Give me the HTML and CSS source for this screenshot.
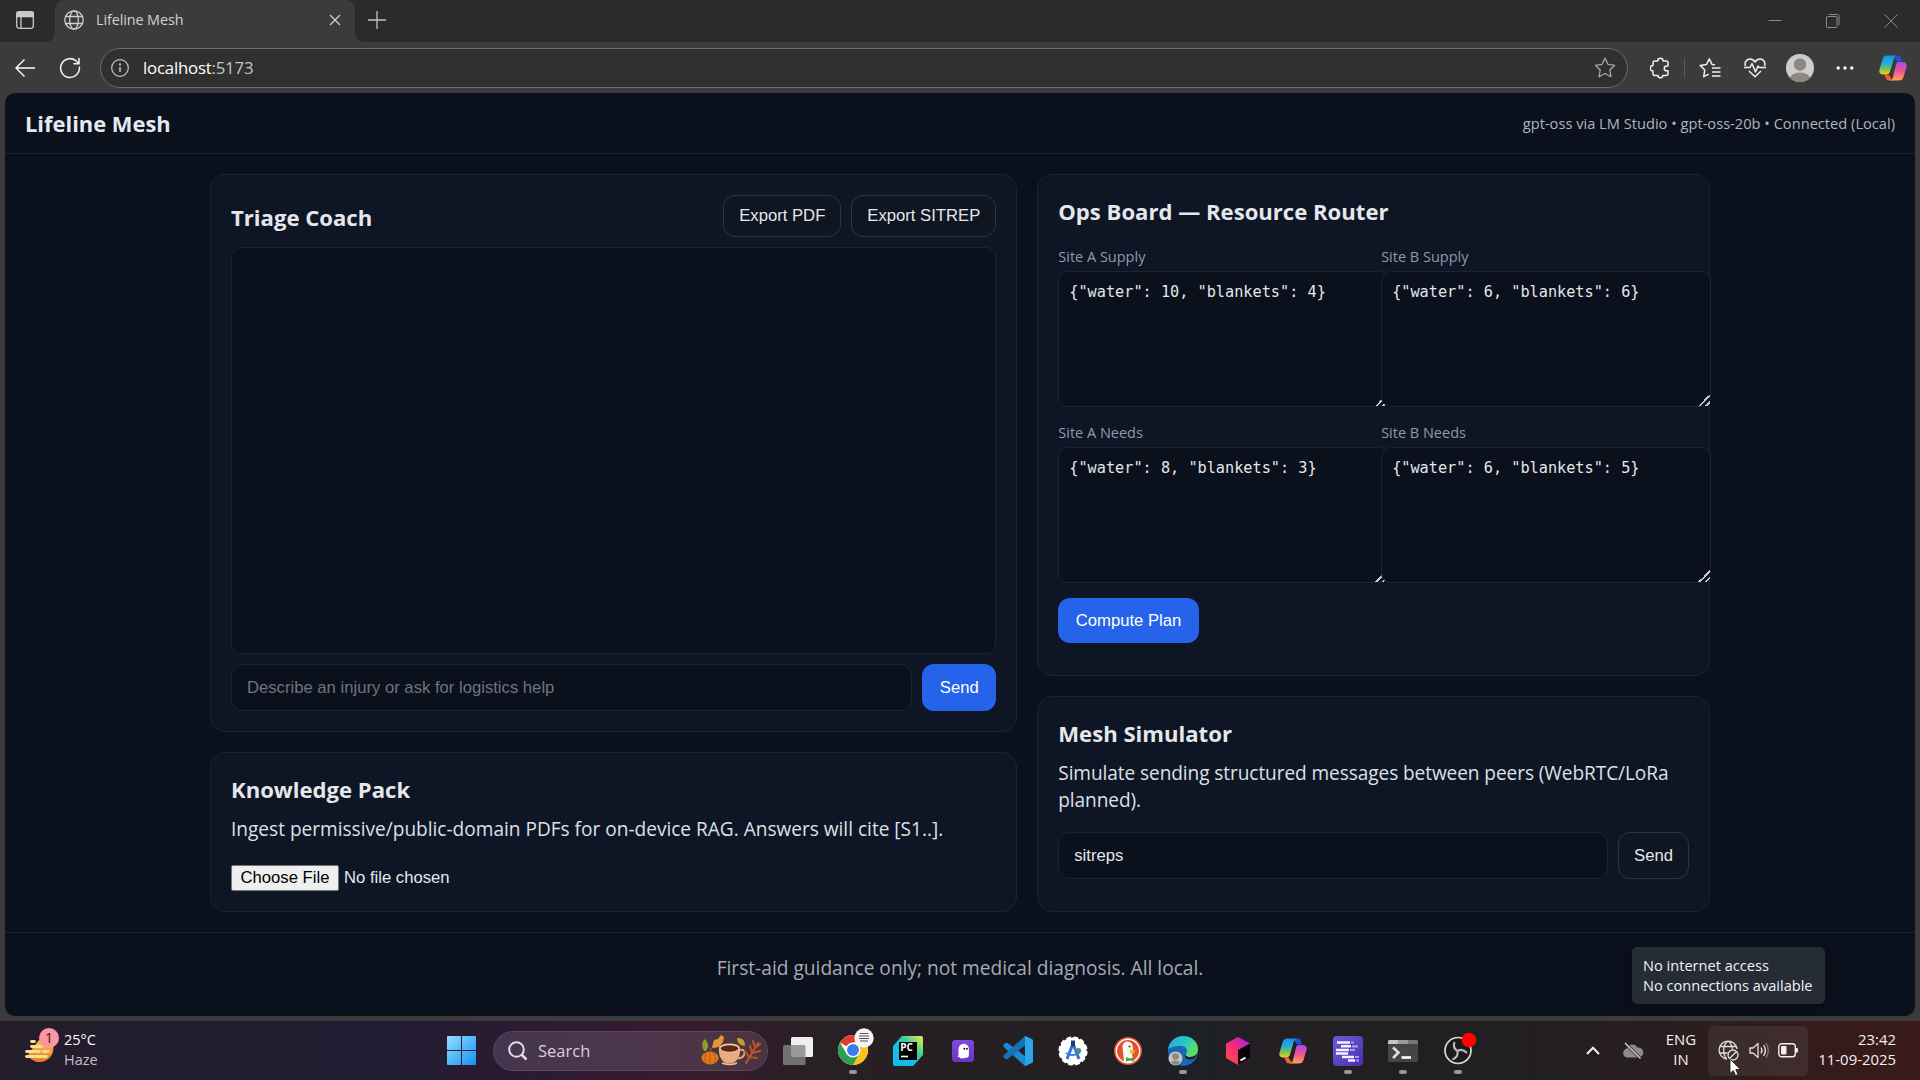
FILE: index.html
```html
<!DOCTYPE html>
<html lang="en">
<head>
<meta charset="utf-8">
<title>Lifeline Mesh</title>
<link rel="stylesheet" href="styles.css">
</head>
<body>
<svg class="defs" width="0" height="0" aria-hidden="true">
  <defs>
    <linearGradient id="cpA" x1="0" y1="0" x2="0" y2="1"><stop offset="0" stop-color="#1d8df0"/><stop offset=".45" stop-color="#27b0d0"/><stop offset=".75" stop-color="#8bc43f"/><stop offset="1" stop-color="#f5d13a"/></linearGradient>
    <linearGradient id="cpB" x1="0" y1="0" x2="0" y2="1"><stop offset="0" stop-color="#a54be8"/><stop offset=".5" stop-color="#f0548c"/><stop offset="1" stop-color="#ffa455"/></linearGradient>
    <linearGradient id="win" x1="0" y1="0" x2="1" y2="1"><stop offset="0" stop-color="#8fe0ff"/><stop offset="1" stop-color="#1490f5"/></linearGradient>
    <linearGradient id="pc" x1="0" y1="1" x2="1" y2="0"><stop offset="0" stop-color="#10b8f0"/><stop offset=".4" stop-color="#16bfe0"/><stop offset=".65" stop-color="#3cd09a"/><stop offset="1" stop-color="#f4f03c"/></linearGradient>
    <linearGradient id="sun" x1="0" y1="0" x2="0" y2="1"><stop offset="0" stop-color="#f7c548"/><stop offset="1" stop-color="#e57b26"/></linearGradient>
    <linearGradient id="edgeA" x1="0" y1="0" x2="1" y2=".5"><stop offset="0" stop-color="#23a5e0"/><stop offset=".6" stop-color="#2cc8c0"/><stop offset="1" stop-color="#63de5e"/></linearGradient>
    <linearGradient id="jb" x1="0" y1="1" x2="1" y2="0"><stop offset="0" stop-color="#ff5a3c"/><stop offset=".5" stop-color="#f52a78"/><stop offset="1" stop-color="#a020f0"/></linearGradient>
    <linearGradient id="lst" x1="0" y1="0" x2="1" y2="1"><stop offset="0" stop-color="#6a5ed8"/><stop offset="1" stop-color="#4a2cae"/></linearGradient>
    <linearGradient id="gh" x1="0" y1="0" x2="0" y2="1"><stop offset="0" stop-color="#8247de"/><stop offset="1" stop-color="#6a35c2"/></linearGradient>
    <symbol id="copilot" viewBox="0 0 28 28">
      <path d="M14 1.500h5c2 0 2.600 1 3.200 3l.8 3h-5z" fill="#1a55c8"/>
      <path d="M8.500 1.500h9.500c-2 0-2.800 1.600-3.300 3.500l-3.500 12c-.6 2-1.700 3.500-4 3.500H4.300C1 20.500-.3 18.500.5 15.500l3-10C4.300 3 5.700 1.500 8.500 1.500z" fill="url(#cpA)"/>
      <path d="M5 20.500h4.500l4 6H10c-2 0-2.700-1-3.300-3z" fill="#f0642c"/>
      <path d="M19.500 8h4.200c3.300 0 4.600 2 3.800 5l-3 10c-.8 2.500-2.200 3.500-5 3.500H10.500c2 0 2.800-1 3.300-3l3-12c.5-2 1-3.500 2.700-3.500z" fill="url(#cpB)"/>
    </symbol>
  </defs>
</svg>

<div class="tabstrip">
  <div class="strip-left">
    <svg width="18" height="18" viewBox="0 0 18 18" fill="none" stroke="#c9c9c9" stroke-width="1.300"><rect x=".7" y=".7" width="16.600" height="16.600" rx="2.500"/><path d="M1 1.500h16v4H1z" fill="#c9c9c9"/><path d="M5 5v12"/></svg>
  </div>
  <div class="tab-slot">
    <div class="tab">
      <svg width="20" height="20" viewBox="0 0 20 20" fill="none" stroke="#d0d0d0" stroke-width="1.300"><circle cx="10" cy="10" r="9.200"/><ellipse cx="10" cy="10" rx="4.300" ry="9.200"/><path d="M1.600 6.500h16.800M1.600 13.500h16.800"/></svg>
      <span class="tab-title">Lifeline Mesh</span>
      <svg width="12" height="12" viewBox="0 0 12 12" stroke="#d0d0d0" stroke-width="1.300"><path d="M1 1l10 10M11 1L1 11"/></svg>
    </div>
  </div>
  <div class="strip-right">
    <svg class="plus" width="18" height="18" viewBox="0 0 18 18" stroke="#c4c4c4" stroke-width="1.300"><path d="M9 0v18M0 9h18"/></svg>
    <div class="captions">
      <span><svg width="14" height="14" viewBox="0 0 14 14" stroke="#8a8a8a"><path d="M.5 6.500h13"/></svg></span>
      <span><svg width="14" height="14" viewBox="0 0 14 14" fill="none" stroke="#8a8a8a"><rect x=".5" y="2.500" width="10.500" height="11" rx=".8"/><path d="M3 .5h8.500q1.500 0 1.500 1.500v9"/></svg></span>
      <span><svg width="14" height="14" viewBox="0 0 14 14" stroke="#8a8a8a"><path d="M.5.5l13 13M13.500.5l-13 13"/></svg></span>
    </div>
  </div>
</div>

<div class="toolbar">
  <span class="slot back"><svg width="20" height="18" viewBox="0 0 20 18" fill="none" stroke="#fff" stroke-width="1.400"><path d="M20 9H1M9.500.6L1 9l8.500 8.400"/></svg></span>
  <span class="slot reload"><svg width="22" height="22" viewBox="0 0 22 22" fill="none" stroke="#f2f2f2" stroke-width="1.500"><path d="M20.300 9.500A9.400 9.400 0 1 1 17 3.800l2.800 2.700M20 1v5.700h-5.600"/></svg></span>
  <div class="address">
    <svg width="18" height="18" viewBox="0 0 18 18" fill="none" stroke="#c4c4c4" stroke-width="1.200"><circle cx="9" cy="9" r="8.300"/><path d="M9 8v5" stroke-width="1.500"/><circle cx="9" cy="5.400" r=".5" fill="#c4c4c4"/></svg>
    <span class="url">localhost<span>:5173</span></span>
    <svg class="star" width="22" height="21" viewBox="0 0 22 21" fill="none" stroke="#a8a8a8" stroke-width="1.300" stroke-linejoin="round"><path d="M11 1.200l3 6.100 6.700 1-4.900 4.700 1.200 6.700-6-3.200-6 3.200 1.200-6.700L1.300 8.300l6.700-1z"/></svg>
  </div>
  <span class="slot ext"><svg width="20" height="22" viewBox="0 0 20 22" fill="none" stroke="#f0f0f0" stroke-width="1.500" stroke-linejoin="round"><path d="M4.500 4h3.200a2.700 2.700 0 0 1 5.400 0h3q1.900 0 1.900 1.900V9h-1.300a2.400 2.400 0 0 0 0 4.800H18v2.700q0 1.900-1.900 1.900h-3.300a2.400 2.400 0 0 1-4.800 0H4.500q-1.500 0-1.500-1.900V14a2.700 2.700 0 0 1 0-5.400V5.900Q3 4 4.500 4z"/></svg></span>
  <i class="divider"></i>
  <span class="slot"><svg width="22" height="20" viewBox="0 0 22 20" fill="none" stroke="#f0f0f0" stroke-width="1.500" stroke-linejoin="round"><path d="M16 6.800l-3-.4L10.300.9 7.500 6.500 1.200 7.400 5.800 12 4.700 18.700l5-2.600M13 10h8.500M13 14h8.500M13 18h8.500"/></svg></span>
  <span class="slot"><svg width="22" height="20" viewBox="0 0 22 20" fill="none" stroke="#f0f0f0" stroke-width="1.500" stroke-linejoin="round"><path d="M1.500 8C0 4 3 1 6 1c2.500 0 4 1.500 5 3 1-1.500 2.500-3 5-3 3 0 6 3 4.500 7M0 9.500h6l2-4 3.500 8.500 2.500-6 1.200 1.500H22M5 13l6 5.800 6-5.800"/></svg></span>
  <span class="slot"><svg width="28" height="28" viewBox="0 0 28 28"><clipPath id="av"><circle cx="14" cy="14" r="14"/></clipPath><g clip-path="url(#av)"><path d="M0 0h28v28H0z" fill="#cfcdca"/><circle cx="14" cy="10.500" r="6.200" fill="#8b8885"/><ellipse cx="14" cy="25.500" rx="10.500" ry="7" fill="#8b8885"/></g></svg></span>
  <span class="slot"><svg width="18" height="4" viewBox="0 0 18 4" fill="#fff"><circle cx="2.200" cy="2" r="1.700"/><circle cx="9" cy="2" r="1.700"/><circle cx="15.800" cy="2" r="1.700"/></svg></span>
  <span class="slot last"><svg width="28" height="28"><use href="#copilot"/></svg></span>
</div>

<div class="viewport">
  <div class="page">
    <header class="app-header">
      <h1>Lifeline Mesh</h1>
      <div class="status">gpt-oss via LM Studio • gpt-oss-20b • Connected (Local)</div>
    </header>
    <main class="board">
      <div class="column">
        <section class="card coach">
          <div class="coach-head">
            <h2>Triage Coach</h2>
            <div class="actions"><button class="btn ghost">Export PDF</button><button class="btn ghost">Export SITREP</button></div>
          </div>
          <div class="chat"></div>
          <div class="row"><input class="field" placeholder="Describe an injury or ask for logistics help"><button class="btn primary">Send</button></div>
        </section>
        <section class="card knowledge">
          <h2>Knowledge Pack</h2>
          <p class="ingest">Ingest permissive/public-domain PDFs for on-device RAG. Answers will cite [S1..].</p>
          <div class="file"><span class="choose">Choose File</span><span>No file chosen</span></div>
        </section>
      </div>
      <div class="column">
        <section class="card ops">
          <h2>Ops Board — Resource Router</h2>
          <div class="sites">
            <div><label>Site A Supply</label><textarea spellcheck="false">{"water": 10, "blankets": 4}</textarea></div>
            <div><label>Site B Supply</label><textarea spellcheck="false">{"water": 6, "blankets": 6}</textarea></div>
            <div><label>Site A Needs</label><textarea spellcheck="false">{"water": 8, "blankets": 3}</textarea></div>
            <div><label>Site B Needs</label><textarea spellcheck="false">{"water": 6, "blankets": 5}</textarea></div>
          </div>
          <button class="btn primary compute">Compute Plan</button>
        </section>
        <section class="card mesh">
          <h2>Mesh Simulator</h2>
          <p>Simulate sending structured messages between peers (WebRTC/LoRa<br>planned).</p>
          <div class="row"><input class="field" value="sitreps"><button class="btn ghost">Send</button></div>
        </section>
      </div>
    </main>
    <footer class="app-footer">First-aid guidance only; not medical diagnosis. All local.</footer>
  </div>
</div>

<div class="taskbar">
  <div class="weather">
    <svg width="36" height="38" viewBox="0 0 36 38"><path d="M4 25L14 12 28.500 19A14 14 0 0 1 3 28z" fill="url(#sun)"/><path d="M6.500 13.500h3M6.500 18.500h10M1.500 23.500h13M18.500 23.500h5M1.500 28.500h20" stroke="#f8dc94" stroke-width="2.800" stroke-linecap="round"/><circle cx="24" cy="10" r="10" fill="#fb96a2"/><text x="24" y="15" class="badge-num">1</text></svg>
    <div class="weather-text"><b>25°C</b><span>Haze</span></div>
  </div>
  <svg class="start" width="29" height="29" viewBox="0 0 29 29" fill="url(#win)"><path d="M1 0h13v14H0V1q0-1 1-1zM15 0h13q1 0 1 1v13H15zM0 15h14v14H1q-1 0-1-1zM15 15h14v13q0 1-1 1H15z"/></svg>
  <div class="search">
    <svg width="20" height="20" viewBox="0 0 20 20" fill="none" stroke="#e4dde6" stroke-width="2"><circle cx="8.500" cy="8.500" r="7.300"/><path d="M13.500 13.500l5 5" stroke-width="2.500"/></svg>
    <span>Search</span>
    <svg class="autumn" width="60" height="32" viewBox="0 0 60 32">
      <path d="M3 16Q-1 8 4 4q6 6 1 12z" fill="#8e9a2c"/><path d="M11 12l2-7 4-1 3-4 3 2-1 5-4 5-6 1z" fill="#e89434"/><path d="M36 3q8-1 8 8-8-1-8-8z" fill="#c99a30"/>
      <ellipse cx="9" cy="23" rx="8.500" ry="6.500" fill="#e07a1c"/><path d="M9 17v12M5 18q-3 5 0 10M13 18q3 5 0 10" stroke="#b9560e" fill="none"/><path d="M9 17l1-4" stroke="#6b5a20" stroke-width="2"/>
      <path d="M18 13h21q1 9-5 14-6 3-11 0-6-5-5-14z" fill="#e9ad83"/><path d="M39 15q6-1 4 5-2 4-7 3" fill="none" stroke="#e2a277" stroke-width="2"/><ellipse cx="28.500" cy="13" rx="10.500" ry="4.500" fill="#f3c7a0"/><ellipse cx="28.500" cy="13.500" rx="8.800" ry="3.300" fill="#5a2a12"/><path d="M21 28q8 3 15 0" stroke="#f0c090" stroke-width="1.500" fill="none"/>
      <path d="M45 28L57 8M48 22l-4-6M51 18l-2-7M48 22l8 1M51 18l8-2M54 13l5-4M54 13l-2-7" stroke="#b5532a" stroke-width="2.200" stroke-linecap="round"/>
    </svg>
  </div>
  <div class="apps">
    <span class="app"><svg width="30" height="28" viewBox="0 0 30 28"><rect x="8" y="0" width="22" height="20" rx="1.500" fill="#efefef"/><rect x="0" y="8" width="22.500" height="20" rx="1.500" fill="#858585" opacity=".8"/></svg></span>
    <span class="app run chrome"><svg width="38" height="38" viewBox="0 0 38 38"><circle cx="17" cy="22" r="15" fill="#fff"/><path d="M17 22L4 14.500A15 15 0 0 1 30 14.500H17z" fill="#e33b2e"/><path d="M17 14.500h13A15 15 0 0 1 17 37l6.500-11.500z" fill="#fbc116"/><path d="M4 14.500A15 15 0 0 0 17 37l6.500-11.500-13 0z" fill="#2f9e4f"/><circle cx="17" cy="22" r="7.500" fill="#fff"/><circle cx="17" cy="22" r="6" fill="#3b7ded"/><circle cx="28" cy="10" r="9.700" fill="#f4f4f4"/><path d="M24 5.500h8M23 8h10M23 10.500h10M24 13h8" stroke="#555" stroke-width="1.100"/></svg></span>
    <span class="app"><svg width="30" height="30" viewBox="0 0 30 30"><path d="M9 0h19q2 0 2 2v17L20 30H2q-2 0-2-2V10z" fill="url(#pc)"/><path d="M6 6h18v18H6z" fill="#000"/><text x="7.300" y="15" class="pc-text">PC</text><path d="M8 20.500h7" stroke="#fff" stroke-width="1.600"/></svg></span>
    <span class="app"><svg width="22" height="22" viewBox="0 0 22 22"><rect width="22" height="22" rx="3.500" fill="url(#gh)"/><path d="M6.500 15V9a5.200 5.200 0 0 1 10.400 0v6q-.5 3.500-2.700 2.600-1.600 1.300-2.900.4-2.600 1.100-3.600-.8-3.200.4-1.200-2.200z" fill="#fff"/><circle cx="12.300" cy="8.800" r="1" fill="#222"/><circle cx="15" cy="8.800" r="1" fill="#222"/></svg></span>
    <span class="app"><svg width="30" height="30" viewBox="0 0 30 30"><path d="M22 0l7 3.200q1 .5 1 1.600v20.400q0 1.100-1 1.600L22 30 .7 11 .3 9l2.500-2.200h1.500L22 20z" fill="#1b88d0"/><path d="M22 0L.5 19.500v1.600L2.800 23.200h1.500L22 9.500z" fill="#1473b8"/><path d="M22 0l7 3.200q1 .5 1 1.600v20.400q0 1.100-1 1.600L22 30z" fill="#2ea5ea"/></svg></span>
    <span class="app"><svg width="30" height="30" viewBox="0 0 30 30"><circle cx="15" cy="15" r="13.600" fill="#fff" stroke="#fff" stroke-width="2" stroke-dasharray="4.700 2.420"/><path d="M9 23l5.500-14h1L21 23" fill="none" stroke="#3670e2" stroke-width="3"/><path d="M8 17q7 4.500 14-.5" stroke="#3c80e8" fill="none" stroke-width="2"/><path d="M13 4.500h4v6h-4z" fill="#1e3c73"/><circle cx="20.500" cy="14.500" r="2.600" fill="#2f9b6d"/></svg></span>
    <span class="app"><svg width="28" height="28" viewBox="0 0 28 28"><circle cx="14" cy="14" r="14" fill="#e0532f"/><circle cx="14" cy="14" r="11.700" fill="none" stroke="#fff" stroke-width="1.400"/><path d="M10 24.500L8.500 10Q8.500 5 13 4.500q6 0 6 7l-1 5 1.500 8q-5 2-9.500 0z" fill="#f7f7f5"/><path d="M16 12.500q4 0 6 1.500l-3 1 2 1.500h-5z" fill="#f8c120"/><circle cx="15.500" cy="9.500" r="1" fill="#234"/><path d="M12 20l4 1.500 4-1.500v4.500l-4-1-4 1z" fill="#50a43e"/></svg></span>
    <span class="app run"><svg width="30" height="30" viewBox="0 0 30 30"><circle cx="15" cy="15" r="15" fill="#1769b5"/><path d="M0 14C1 5 8 0 15 0c9 0 15 6 15 13 0 5-4 8-8 8-3 0-5-1-4-3 2-3 1-8-5-8C7 10 1 11 0 14z" fill="url(#edgeA)"/><path d="M18 18c-1 2 1 3 4 3 3 0 5-1 7-3-1 4-4 5.500-7 5.500-4.500 0-6-2.500-4-5.500z" fill="#1e2026"/><circle cx="7.500" cy="22.500" r="7" fill="#c6c3bf"/><circle cx="7.500" cy="20.500" r="3.300" fill="#8c8986"/><path d="M2.500 26.500q5-4 10 0-5 5-10 0z" fill="#8c8986"/></svg></span>
    <span class="app"><svg width="24" height="28" viewBox="0 0 24 28"><path d="M12 0l12 6.500V21l-12 7L0 21V6.500z" fill="url(#jb)"/><path d="M12 13l12-6.500V21l-12 7z" fill="#0a0207"/><path d="M14.500 23.500l5-2.800" stroke="#fff" stroke-width="2"/></svg></span>
    <span class="app"><svg width="28" height="28"><use href="#copilot"/></svg></span>
    <span class="app run"><svg width="30" height="30" viewBox="0 0 30 30"><rect width="30" height="30" rx="4" fill="url(#lst)"/><path d="M4 6.500h13M8 10.300h10M3 14h13M3 17.500h12M9 21h12M15 24.500h7" stroke="#f2efff" stroke-width="2.400"/><path d="M18 6.500h3M19 10.300h6M17 14h5M22 21h4M23 24.500h3" stroke="#a79ae6" stroke-width="2.200"/></svg></span>
    <span class="app run"><svg width="30" height="22" viewBox="0 0 30 22"><rect width="30" height="22" rx="1.500" fill="#454545"/><path d="M0 1.500Q0 0 1.500 0H10v4H0z" fill="#c4c4c4"/><path d="M10 0h10v4H10z" fill="#9a9a9a"/><path d="M20 0h8.500Q30 0 30 1.500V4H20z" fill="#777"/><path d="M5 7.500l5.500 5L5 18" fill="none" stroke="#ddd" stroke-width="2.600"/><path d="M13.500 17.500H23" stroke="#fff" stroke-width="2.600"/></svg></span>
    <span class="app run"><svg width="38" height="38" viewBox="0 0 38 38"><circle cx="19" cy="22.500" r="13" fill="#1c1a1c" stroke="#d8d8d8" stroke-width="1.700"/><path d="M18.500 23q-5-3-3-9M18.500 23q5-3 9.500 2M18.500 23q1 6-5 8.500" fill="none" stroke="#b9b9b9" stroke-width="2.200"/><circle cx="30" cy="12" r="7.300" fill="#fd0404"/></svg></span>
  </div>
  <div class="tray">
    <span class="chev"><svg width="14" height="9" viewBox="0 0 14 9" fill="none" stroke="#eee" stroke-width="2"><path d="M1 8l6-6.300L13 8"/></svg></span>
    <span class="cloud"><svg width="22" height="18" viewBox="0 0 22 18"><path d="M5 15.500a4.500 4.500 0 0 1-.5-8.800A6 6 0 0 1 15.500 5.500a5 5 0 0 1 1.500 10z" fill="#8b8b8d"/><path d="M3.500 1.500l15 15" stroke="#252326" stroke-width="3"/><path d="M3 1l15.500 15.500" stroke="#d5d5d5" stroke-width="1.400"/></svg></span>
    <div class="lang"><span>ENG</span><span>IN</span></div>
    <div class="quick">
      <svg width="21" height="21" viewBox="0 0 21 21" fill="none" stroke="#e6e0e0" stroke-width="1.300"><path d="M9 19A9 9 0 1 1 19 9M8.500 18.800C4.500 14 4.500 5 10 1c3 2 4 5 4.200 8M1.800 6.500h16.400M1.500 13h8"/><circle cx="15" cy="15" r="5"/><path d="M11.500 18.500l7-7"/></svg>
      <svg width="20" height="17" viewBox="0 0 20 17" fill="none" stroke="#e6e0e0" stroke-width="1.300"><path d="M1 6h3l5-4.500v14L4 11H1z" stroke-linejoin="round"/><path d="M12 5.500q2 3 0 6M14.500 3q3.700 5.500 0 11"/><path d="M17 1q4.500 7.500 0 15" stroke="#85797a"/></svg>
      <svg width="20" height="15" viewBox="0 0 20 15"><rect x=".8" y=".8" width="16.500" height="13" rx="2.800" fill="none" stroke="#f2eeee" stroke-width="1.400"/><rect x="3" y="3" width="5.500" height="8.600" rx="1" fill="#f2eeee"/><path d="M18 5h1q1 0 1 1v2.600q0 1-1 1h-1z" fill="#f2eeee"/></svg>
    </div>
    <div class="clock"><span>23:42</span><span>11-09-2025</span></div>
  </div>
</div>

<div class="tooltip"><span>No internet access</span><span>No connections available</span></div>
<svg class="cursor" width="13" height="20" viewBox="0 0 13 20"><path d="M1 1v14.500l3.300-3 2.200 5 2.500-1-2.200-5h4.600z" fill="#fff" stroke="#111" stroke-width=".8"/></svg>
</body>
</html>
```
FILE: styles.css
```css
* { box-sizing: border-box; }

body {
  margin: 0;
  width: 1920px;
  height: 1080px;
  overflow: hidden;
  display: flex;
  flex-direction: column;
  position: relative;
  background: #3b3b3b;
  color: #e5e7eb;
  font-family: "Open Sans", "Noto Sans", sans-serif;
}

svg { display: block; flex: none; }
.defs { position: absolute; }
h1, h2, p { margin: 0; }

/* Browser window */
.tabstrip { display: flex; height: 42px; }
.strip-left {
  width: 55px;
  padding: 11px 0 0 16px;
  background: #2b2b2b;
  border-bottom-right-radius: 9px;
}
.tab-slot { width: 300px; background: linear-gradient(#2b2b2b 50%, #3b3b3b 50%); }
.tab {
  height: 42px;
  padding: 0 14px 3px 9px;
  display: flex;
  align-items: center;
  background: #3b3b3b;
  border-radius: 9px 9px 0 0;
}
.tab-title { margin-left: 12px; flex: 1; font-size: 14.400px; line-height: 18px; color: #d2d2d2; letter-spacing: -.1px; }
.strip-right {
  flex: 1;
  display: flex;
  justify-content: space-between;
  background: #2b2b2b;
  border-bottom-left-radius: 9px;
}
.plus { margin: 11px 0 0 13px; }
.captions { display: flex; width: 174px; height: 42px; }
.captions span { width: 58px; display: flex; align-items: center; justify-content: center; }

.toolbar { height: 51px; display: flex; align-items: center; }
.slot { width: 45px; display: flex; justify-content: center; }
.slot.back { width: 50px; }
.slot.reload { width: 40px; margin-right: 10px; }
.slot.ext { margin-left: 9px; }
.slot.last { width: 51px; }
.divider { width: 1px; height: 20px; margin: 0 2px; background: #5c5c5c; }
.address {
  width: 1528px;
  height: 40px;
  padding: 0 11px 0 10px;
  display: flex;
  align-items: center;
  border: 1px solid #6c6c6c;
  border-radius: 20px;
  background: #303030;
}
.url { flex: 1; margin-left: 14px; font-size: 16.800px; line-height: 22px; color: #fff; letter-spacing: -.2px; }
.url span { color: #c4c4c4; }

/* Page */
.viewport { height: 928px; padding: 0 5px 5px; }
.page { height: 923px; border-radius: 10px; overflow: hidden; background: #0a101c; }
.app-header {
  height: 61px;
  padding: 0 20px;
  display: flex;
  align-items: center;
  justify-content: space-between;
  border-bottom: 1px solid #1d2430;
}
h1, h2 { font-weight: 700; font-size: 22.100px; line-height: 30px; }
h1 { padding-top: 1px; color: #e5e9f0; font-size: 21.900px; }
.status { font-size: 14.650px; color: #b0b5bf; }

.board {
  width: 1500px;
  margin: 20px auto;
  display: grid;
  grid-template-columns: 1.200fr 1fr;
  gap: 20px;
}
.column { display: flex; flex-direction: column; gap: 20px; }
.card {
  padding: 20px;
  background: #0e1525;
  border: 1px solid #1c2333;
  border-radius: 15px;
}
.coach { height: 558px; }
.coach-head { display: flex; justify-content: space-between; height: 52px; }
.coach-head h2 { padding-top: 7px; }
.actions { display: flex; gap: 10px; height: 42px; }
.chat { height: 407px; border: 1px solid #1c2333; border-radius: 10px; background: #0a101c; }
.row { display: flex; gap: 10px; margin-top: 10px; height: 47px; }
.field {
  flex: 1;
  min-width: 0;
  padding: 0 15px;
  border: 1px solid #1c2333;
  border-radius: 12px;
  background: #0a101c;
  color: #e5e7eb;
  font: 16.670px "Liberation Sans", sans-serif;
}
.field::placeholder { color: #70747b; }
.btn {
  padding: 0 15px 1px;
  border: 1px solid #2d3446;
  border-radius: 12px;
  background: #0f1622;
  color: #e5e7eb;
  font: 16.670px "Liberation Sans", sans-serif;
  white-space: nowrap;
}
.btn.primary { padding: 0 17.500px; border: 0; background: #2563eb; color: #fff; }

.knowledge { height: 160px; }
.knowledge h2 { margin-top: 1px; }
p { font-size: 19.070px; line-height: 27px; color: #dde0e6; }
.ingest { margin-top: 12px; }
.file { display: flex; align-items: center; gap: 5px; margin-top: 22px; font: 16.670px "Liberation Sans", sans-serif; }
.choose {
  width: 108px;
  height: 26px;
  line-height: 24px;
  text-align: center;
  border: 1px solid #767676;
  border-radius: 2px;
  background: #efefef;
  color: #000;
}

.ops { height: 502px; }
.ops h2 { margin-top: 1px; }
.sites { display: grid; grid-template-columns: 1fr 1fr; column-gap: 15px; margin-top: 18px; }
.sites > div { height: 176px; min-width: 0; }
label { display: block; height: 27px; font-size: 14.500px; line-height: 26px; color: #9299a6; }
textarea {
  display: block;
  position: relative;
  width: calc(100% + 22px);
  height: 136px;
  margin: 0;
  padding: 10px;
  border: 1px solid #1c2333;
  border-radius: 10px;
  background: #0a101c;
  color: #e5e7eb;
  font: 15.220px/20px "DejaVu Sans Mono", monospace;
  overflow: hidden;
  resize: vertical;
}
textarea::-webkit-resizer {
  background: linear-gradient(135deg, transparent 60%, #c3c7ce 60% 68%, transparent 68% 82%, #c3c7ce 82% 90%, transparent 90%);
}
.compute { display: block; height: 45px; margin-top: 2px; }
.mesh { height: 216px; }
.mesh h2 { margin-top: 1px; }
.mesh p { margin-top: 12px; letter-spacing: -.08px; }
.mesh .row { margin-top: 18px; }
.mesh .btn { padding-bottom: 0; }

.app-footer {
  height: 84px;
  padding-top: 21px;
  border-top: 1px solid #1d2430;
  text-align: center;
  font-size: 19.150px;
  line-height: 28px;
  color: #a5abb6;
}

/* Taskbar */
.taskbar {
  height: 59px;
  display: flex;
  align-items: center;
  background: linear-gradient(90deg, #241c2b 0, #1f1e30 230px, #221c32 400px, #2e1a32 560px, #371c2e 700px, #272024 830px, #231f22 1100px, #1d2028 1190px, #231f22 1270px, #211f21 1500px, #2a1e1f 1680px, #381a1a 1880px);
}
.weather { display: flex; width: 447px; padding-left: 25px; }
.weather svg { margin-top: -4px; }
.badge-num { font: 14px "Open Sans", sans-serif; fill: #33161c; text-anchor: middle; }
.weather-text { display: flex; flex-direction: column; margin: -2px 0 0 3px; font-size: 14.500px; line-height: 20px; }
.weather-text b { font-weight: 400; color: #fff; }
.weather-text span { color: #c3bfc8; }
.search {
  width: 275px;
  height: 40px;
  margin: 0 2.500px 0 17px;
  padding: 0 6px 0 14px;
  display: flex;
  align-items: center;
  border: 1px solid #5b4660;
  border-radius: 20px;
  background: linear-gradient(90deg, #46354f, #4c354a 60%, #4a3440);
}
.search span { flex: 1; margin-left: 10px; font-size: 16.500px; color: #d8d1da; }
.apps { display: flex; }
.app { position: relative; width: 55px; height: 59px; display: flex; align-items: center; justify-content: center; }
.app svg[width="38"] { margin-top: -8px; }
.app.chrome svg { margin-left: 4px; }
.app.run::after {
  content: "";
  position: absolute;
  left: 23px;
  bottom: 6px;
  width: 8px;
  height: 4px;
  border-radius: 2px;
  background: #98969a;
}
.pc-text { font: 700 10px "Open Sans", sans-serif; fill: #fff; }
.tray { flex: 1; display: flex; align-items: center; justify-content: flex-end; font-size: 14.900px; line-height: 20px; color: #f3f0f0; }
.chev { margin-right: 22px; }
.lang, .clock { display: flex; flex-direction: column; margin-top: -3px; }
.lang { width: 56px; margin-right: -1px; margin-left: 9px; align-items: center; }
.quick {
  width: 100px;
  height: 50px;
  padding: 0 10px;
  display: flex;
  align-items: center;
  justify-content: space-between;
  border-radius: 5px;
  background: rgba(255, 255, 255, .07);
}
.clock { width: 88px; margin-right: 24px; align-items: flex-end; }

.tooltip {
  position: absolute;
  left: 1632px;
  top: 947px;
  width: 193px;
  height: 57px;
  padding: 8px 11px;
  display: flex;
  flex-direction: column;
  border-radius: 5px;
  background: #262c36;
  box-shadow: 0 3px 8px rgba(0, 0, 0, .4);
  font-size: 14.600px;
  line-height: 20px;
  color: #f0f2f4;
  white-space: nowrap;
}
.cursor { position: absolute; left: 1729px; top: 1058px; }
```
